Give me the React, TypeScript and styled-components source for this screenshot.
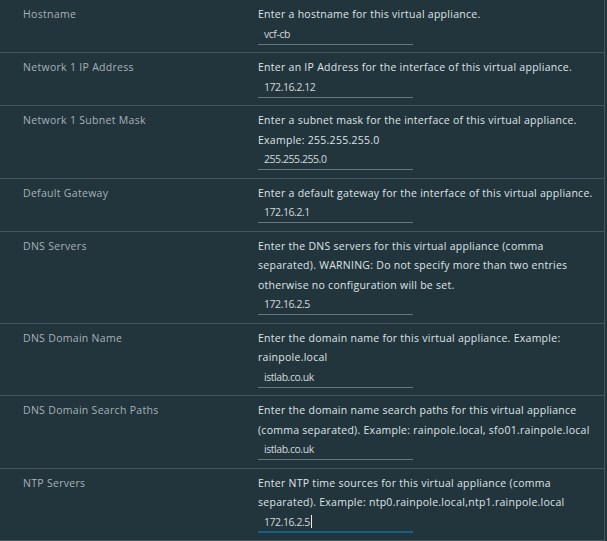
import { createGlobalStyle, styled } from 'styled-components'

interface Field {
  label: string
  help: string[]
  value: string
  focused?: boolean
}

const fields: Field[] = [
  { label: 'Hostname', help: ['Enter a hostname for this virtual appliance.'], value: 'vcf-cb' },
  {
    label: 'Network 1 IP Address',
    help: ['Enter an IP Address for the interface of this virtual appliance.'],
    value: '172.16.2.12',
  },
  {
    label: 'Network 1 Subnet Mask',
    help: ['Enter a subnet mask for the interface of this virtual appliance.', 'Example: 255.255.255.0'],
    value: '255.255.255.0',
  },
  {
    label: 'Default Gateway',
    help: ['Enter a default gateway for the interface of this virtual appliance.'],
    value: '172.16.2.1',
  },
  {
    label: 'DNS Servers',
    help: [
      'Enter the DNS servers for this virtual appliance (comma',
      'separated). WARNING: Do not specify more than two entries',
      'otherwise no configuration will be set.',
    ],
    value: '172.16.2.5',
  },
  {
    label: 'DNS Domain Name',
    help: ['Enter the domain name for this virtual appliance. Example:', 'rainpole.local'],
    value: 'istlab.co.uk',
  },
  {
    label: 'DNS Domain Search Paths',
    help: [
      'Enter the domain name search paths for this virtual appliance',
      '(comma separated). Example: rainpole.local, sfo01.rainpole.local',
    ],
    value: 'istlab.co.uk',
  },
  {
    label: 'NTP Servers',
    help: [
      'Enter NTP time sources for this virtual appliance (comma',
      'separated). Example: ntp0.rainpole.local,ntp1.rainpole.local',
    ],
    value: '172.16.2.5',
    focused: true,
  },
]

const GlobalStyle = createGlobalStyle`
  html, body {
    margin: 0;
    padding: 0;
    background: #22343c;
  }
  body {
    font-family: 'Open Sans', Lato, 'Liberation Sans', sans-serif;
    font-size: 10.5px;
    -webkit-font-smoothing: antialiased;
  }
`

const Table = styled.div`
  width: 604px;
  border-right: 1px solid #45565e;
`

const Row = styled.div`
  display: grid;
  grid-template-columns: 258px 1fr;
  padding: 5px 0 7.5px;
  border-bottom: 1px solid #45565e;
`

const Label = styled.div`
  padding-left: 23px;
  line-height: 19.5px;
  color: #a7b2b8;
  letter-spacing: 0.3px;
`

const Help = styled.div`
  line-height: 19.5px;
  color: #dfe4e7;
  letter-spacing: 0.27px;
  white-space: nowrap;
`

const Input = styled.div<{ $focused?: boolean }>`
  box-sizing: border-box;
  width: 155px;
  height: 20px;
  padding-left: 6px;
  line-height: 18px;
  color: #d3d9dc;
  letter-spacing: -0.45px;
  border-bottom: ${({ $focused }) => ($focused ? '2px solid #0f6188' : '1px solid #66767e')};
`

const Caret = styled.span`
  display: inline-block;
  width: 1px;
  height: 13px;
  margin-left: 1px;
  vertical-align: -2px;
  background: #e8ecee;
`

export default function App() {
  return (
    <>
      <GlobalStyle />
      <Table>
        {fields.map((f) => (
          <Row key={f.label}>
            <Label>{f.label}</Label>
            <div>
              {f.help.map((line) => (
                <Help key={line}>{line}</Help>
              ))}
              <Input $focused={f.focused}>
                {f.value}
                {f.focused && <Caret />}
              </Input>
            </div>
          </Row>
        ))}
      </Table>
    </>
  )
}
